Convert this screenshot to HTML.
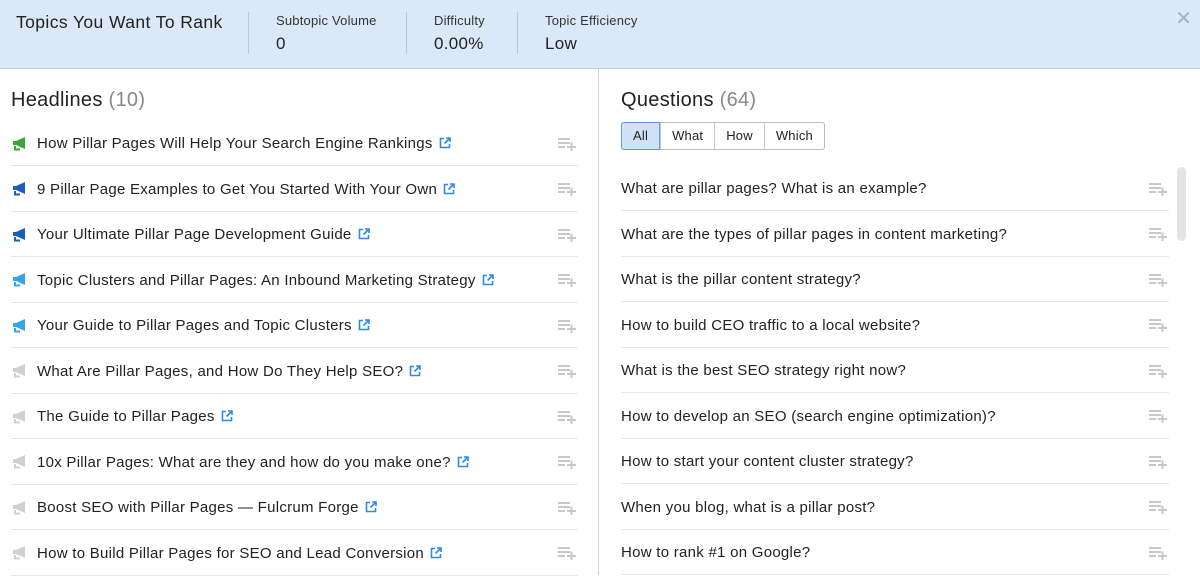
<!DOCTYPE html>
<html><head><meta charset="utf-8"><style>
*{margin:0;padding:0;box-sizing:border-box}
body{width:1200px;height:575px;overflow:hidden;background:#fff;font-family:"Liberation Sans",sans-serif;color:#222;position:relative}
.hdr{position:absolute;left:0;top:0;width:1200px;height:69px;background:#dae8f7;border-bottom:1px solid #c3cfdc}
.t{position:absolute;top:12px;font-size:17.5px;color:#222;letter-spacing:0.4px}
.lab{position:absolute;top:13px;font-size:13px;color:#333;letter-spacing:0.2px}
.val{position:absolute;top:34px;font-size:17px;color:#222;letter-spacing:0.3px}
.sep{position:absolute;top:12px;width:1px;height:42px;background:#b9c7d6}
.close{position:absolute;right:8px;top:6px;font-size:20px;color:#a8b2bd}
.div{position:absolute;left:598px;top:69px;width:1px;height:506px;background:#d4d4d4}
h2{position:absolute;font-size:20px;font-weight:normal;color:#222;top:89px;letter-spacing:0.3px}
h2 span{color:#888}
.row{position:absolute;height:45.5px;border-bottom:1px solid #e1e8ef;font-size:15px;display:flex;align-items:center;letter-spacing:0.27px}
.L{left:11px;width:567px}
.R{left:621px;width:548px}
.row .tx{margin-left:26px;padding-top:2px}
.R .tx{margin-left:0}
.ext{display:inline-block;margin-left:6px;vertical-align:-1px}
.add{position:absolute;right:2px;top:16px}
.ic{position:absolute;left:1px;top:16px}
.tabs{position:absolute;left:621px;top:122px;display:flex;border:1px solid #b9bfc6;border-radius:3px;height:28px;font-size:13px;letter-spacing:0.2px}
.tabs div{padding:0 11px;line-height:26px;border-left:1px solid #c5cad0}
.tabs div:first-child{border-left:none;background:#cfe2f7;border:1px solid #5d9ae0;margin:-1px 0 -1px -1px;border-radius:3px 0 0 3px;line-height:26px}
.sb{position:absolute;left:1177px;top:167px;width:9px;height:74px;background:#e3e3e3;border-radius:5px}
</style></head><body>
<div class="hdr">
<div class="t" style="left:16px">Topics You Want To Rank</div>
<div class="sep" style="left:248px"></div>
<div class="lab" style="left:276px">Subtopic Volume</div><div class="val" style="left:276px">0</div>
<div class="sep" style="left:406px"></div>
<div class="lab" style="left:434px">Difficulty</div><div class="val" style="left:434px">0.00%</div>
<div class="sep" style="left:517px"></div>
<div class="lab" style="left:545px">Topic Efficiency</div><div class="val" style="left:545px">Low</div>
<div class="close">✕</div>
</div>
<div class="div"></div>
<h2 style="left:11px">Headlines <span>(10)</span></h2>
<h2 style="left:621px">Questions <span>(64)</span></h2>
<div class="tabs"><div>All</div><div>What</div><div>How</div><div>Which</div></div>
<div class="sb"></div>
<div id="L"></div><div id="R"></div>
<script>
const ext='<svg class="ext" width="12" height="12" viewBox="0 0 12 12"><path d="M5 1.5H1.5v9h9V7" fill="none" stroke="#2b8be6" stroke-width="1.6"/><path d="M7 1h4v4M11 1L5.5 6.5" fill="none" stroke="#2b8be6" stroke-width="1.6"/></svg>';
const add='<svg class="add" width="18" height="14" viewBox="0 0 18 14"><rect x="0" y="1" width="12" height="2" fill="#c8c8c8"/><rect x="0" y="5" width="12" height="2" fill="#c8c8c8"/><rect x="0" y="9" width="7" height="2" fill="#c8c8c8"/><rect x="9" y="9" width="9" height="2" fill="#c8c8c8"/><rect x="12.5" y="5.5" width="2" height="9" fill="#c8c8c8"/></svg>';
function ic(c){return '<svg class="ic" width="16" height="14" viewBox="0 0 16 14"><path d="M1 4h3l9-4v12L4 8H1z" fill="'+c+'"/><path d="M3 9v3.5h5" fill="none" stroke="'+c+'" stroke-width="2"/></svg>';}
const H=["How Pillar Pages Will Help Your Search Engine Rankings","9 Pillar Page Examples to Get You Started With Your Own","Your Ultimate Pillar Page Development Guide","Topic Clusters and Pillar Pages: An Inbound Marketing Strategy","Your Guide to Pillar Pages and Topic Clusters","What Are Pillar Pages, and How Do They Help SEO?","The Guide to Pillar Pages","10x Pillar Pages: What are they and how do you make one?","Boost SEO with Pillar Pages — Fulcrum Forge","How to Build Pillar Pages for SEO and Lead Conversion"];
const C=["#3aa63a","#1d5fb8","#1d5fb8","#36a4e8","#36a4e8","#d0d0d0","#d0d0d0","#d0d0d0","#d0d0d0","#d0d0d0"];
const Q=["What are pillar pages? What is an example?","What are the types of pillar pages in content marketing?","What is the pillar content strategy?","How to build CEO traffic to a local website?","What is the best SEO strategy right now?","How to develop an SEO (search engine optimization)?","How to start your content cluster strategy?","When you blog, what is a pillar post?","How to rank #1 on Google?"];
let s='';H.forEach((h,i)=>{s+='<div class="row L" style="top:'+(120.5+i*45.5)+'px">'+ic(C[i])+'<span class="tx">'+h+ext+'</span>'+add+'</div>'});
document.getElementById('L').innerHTML=s;s='';
Q.forEach((q,i)=>{s+='<div class="row R" style="top:'+(165.5+i*45.5)+'px"><span class="tx">'+q+'</span>'+add+'</div>'});
document.getElementById('R').innerHTML=s;
</script>
</body></html>
